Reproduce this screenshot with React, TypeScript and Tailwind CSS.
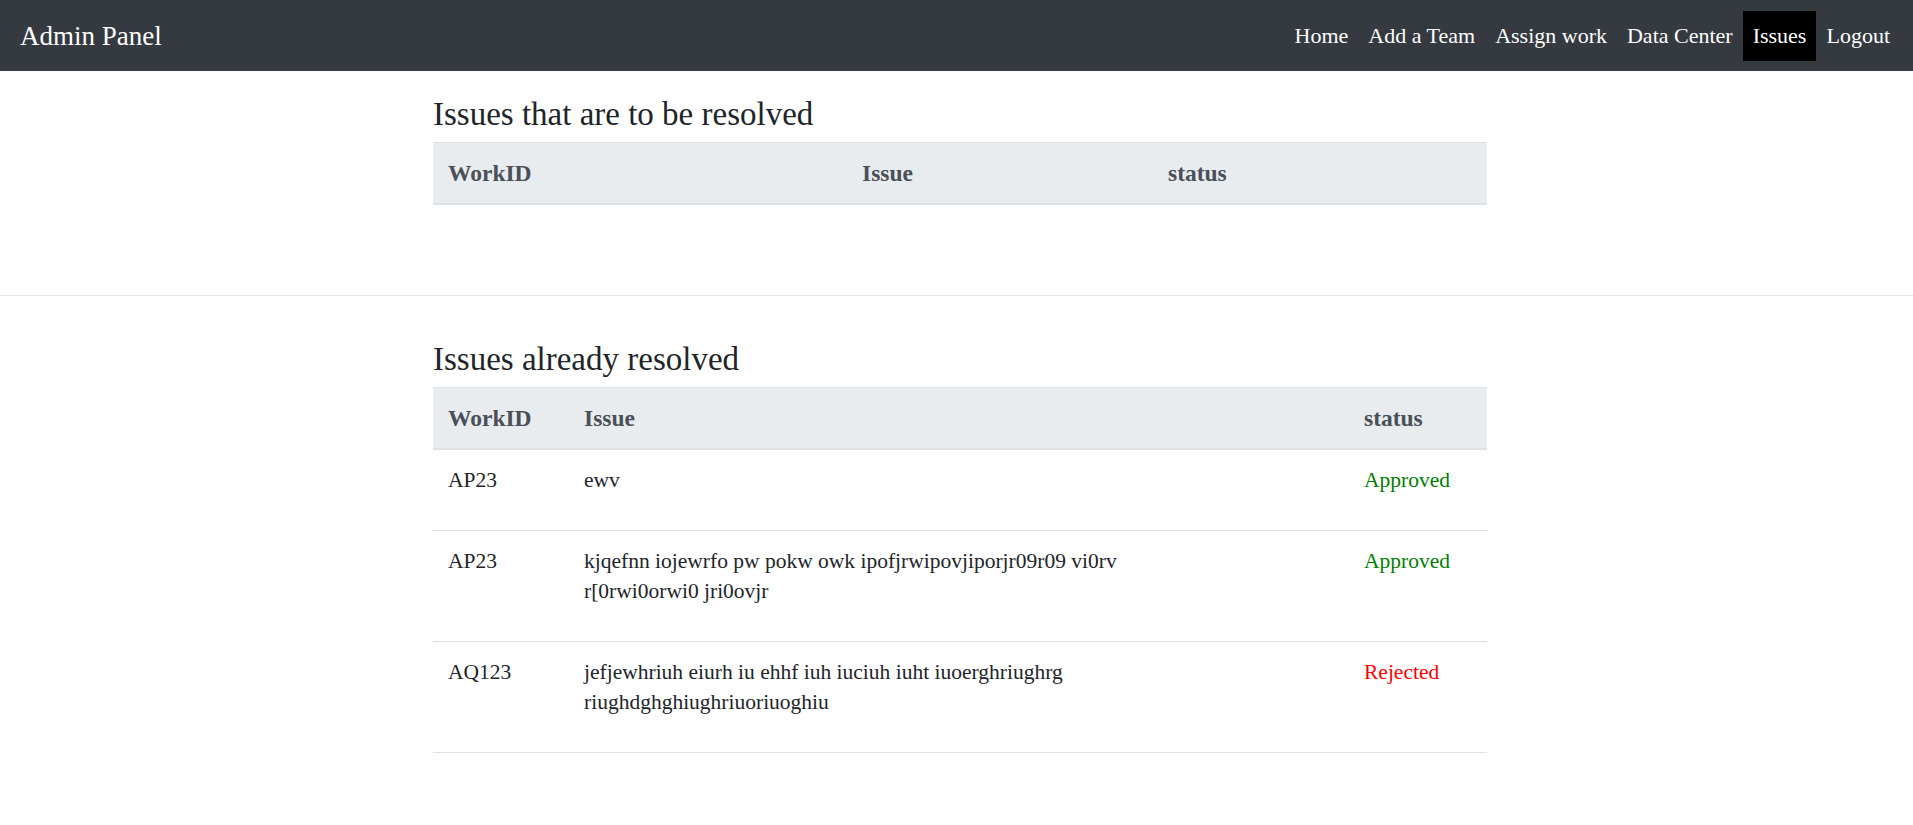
import React from "react";

const links = ["Home", "Add a Team", "Assign work", "Data Center", "Issues", "Logout"];

const resolved = [
  { id: "AP23", issue: "ewv", status: "Approved" },
  {
    id: "AP23",
    issue: "kjqefnn iojewrfo pw pokw owk ipofjrwipovjiporjr09r09 vi0rv r[0rwi0orwi0 jri0ovjr",
    status: "Approved",
  },
  {
    id: "AQ123",
    issue: "jefjewhriuh eiurh iu ehhf iuh iuciuh iuht iuoerghriughrg riughdghghiughriuoriuoghiu",
    status: "Rejected",
  },
];

function Navbar() {
  return (
    <nav className="h-[71px] bg-[#343a40] flex items-center justify-between pl-5 pr-[13px]">
      <div className="text-white text-[27px] leading-[36px]">Admin Panel</div>
      <ul className="flex items-center">
        {links.map((l) => (
          <li key={l}>
            <a
              className={
                "block px-[10px] py-[10px] text-[22px] leading-[30px] text-white " +
                (l === "Issues" ? "bg-black" : "")
              }
            >
              {l}
            </a>
          </li>
        ))}
      </ul>
    </nav>
  );
}

function HeadCell({ children, w }: { children?: React.ReactNode; w: string }) {
  return (
    <th
      className={
        "text-left font-bold text-[23.5px] text-[#495057] bg-[#e9ecef] border-t border-b-2 border-[#dee2e6] px-[15px] py-[15px] leading-[30px] align-bottom " +
        w
      }
    >
      {children}
    </th>
  );
}

export default function App() {
  return (
    <div className="min-h-screen bg-white font-['Liberation_Serif',serif] text-[21.5px] text-[#212529]">
      <Navbar />

      <div className="w-[1054px] ml-[433px] pt-[25px]">
        <h4 className="text-[33px] leading-[36px] mb-[10px]">Issues that are to be resolved</h4>
        <table className="w-full table-fixed border-collapse">
          <thead>
            <tr>
              <HeadCell w="w-[414px]">WorkID</HeadCell>
              <HeadCell w="w-[306px]">Issue</HeadCell>
              <HeadCell w="w-[334px]">status</HeadCell>
            </tr>
          </thead>
          <tbody></tbody>
        </table>
      </div>

      <hr className="mt-[90px] border-0 border-t border-[#e6e6e6]" />

      <div className="w-[1054px] ml-[433px] pt-[45px] pb-10">
        <h4 className="text-[33px] leading-[36px] mb-[10px]">Issues already resolved</h4>
        <table className="w-full table-fixed border-collapse">
          <thead>
            <tr>
              <HeadCell w="w-[136px]">WorkID</HeadCell>
              <HeadCell w="w-[780px]">Issue</HeadCell>
              <HeadCell w="w-[138px]">status</HeadCell>
            </tr>
          </thead>
          <tbody>
            {resolved.map((r, i) => (
              <tr key={i} className="border-t border-b border-[#dee2e6] align-top">
                <td className="px-[15px] pt-[15px] pb-[35px] leading-[30px]">{r.id}</td>
                <td className="px-[15px] pt-[15px] pb-[35px] leading-[30px]">
                  <p className="w-[610px]">{r.issue}</p>
                </td>
                <td
                  className={
                    "px-[15px] pt-[15px] pb-[35px] leading-[30px] " +
                    (r.status === "Approved" ? "text-[#008000]" : "text-[#ff0000]")
                  }
                >
                  {r.status}
                </td>
              </tr>
            ))}
          </tbody>
        </table>
      </div>
    </div>
  );
}
